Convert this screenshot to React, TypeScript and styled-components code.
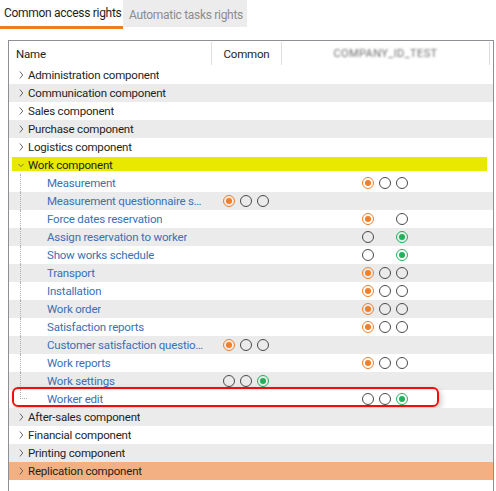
import React from "react";
import styled, { createGlobalStyle, css } from "styled-components";

const Global = createGlobalStyle`
  html, body { margin: 0; padding: 0; background: #fff; overflow: hidden; }
  body {
    font-family: Roboto, "Noto Sans", sans-serif;
    font-size: 11.5px;
    letter-spacing: -0.2px;
    color: #1e1e1e;
  }
`;

const COLS = "202px 70px 208px 1fr";

type Dot = "on" | "off" | "ok" | "none";
type Tone = "plain" | "stripe" | "selected" | "accent";

type Leaf = {
  name: string;
  common?: Dot[];
  company?: Dot[];
  marked?: boolean;
};

type Group = {
  name: string;
  tone?: Tone;
  open?: boolean;
  children?: Leaf[];
};

const on3: Dot[] = ["on", "off", "off"];

const groups: Group[] = [
  { name: "Administration component" },
  { name: "Communication component" },
  { name: "Sales component" },
  { name: "Purchase component" },
  { name: "Logistics component" },
  {
    name: "Work component",
    tone: "selected",
    open: true,
    children: [
      { name: "Measurement", company: on3 },
      { name: "Measurement questionnaire settings", common: on3 },
      { name: "Force dates reservation", company: ["on", "none", "off"] },
      { name: "Assign reservation to worker", company: ["off", "none", "ok"] },
      { name: "Show works schedule", company: ["off", "none", "ok"] },
      { name: "Transport", company: on3 },
      { name: "Installation", company: on3 },
      { name: "Work order", company: on3 },
      { name: "Satisfaction reports", company: on3 },
      { name: "Customer satisfaction questionnaire", common: on3 },
      { name: "Work reports", company: on3 },
      { name: "Work settings", common: ["off", "off", "ok"] },
      { name: "Worker edit", company: ["off", "off", "ok"], marked: true },
    ],
  },
  { name: "After-sales component" },
  { name: "Financial component" },
  { name: "Printing component" },
  { name: "Replication component", tone: "accent" },
];

/* ---------- tabs ---------- */

const TabBar = styled.div`
  display: flex;
  align-items: flex-start;
  height: 29px;
`;

const Tab = styled.div<{ $active?: boolean }>`
  box-sizing: border-box;
  display: flex;
  align-items: center;
  font-size: 12px;
  letter-spacing: -0.3px;
  white-space: nowrap;
  ${(p) =>
    p.$active
      ? css`
          width: 123px;
          height: 29px;
          padding: 0 0 0 4px;
          border-bottom: 3px solid #ee7d22;
          color: #1e1e1e;
        `
      : css`
          width: 124px;
          height: 27px;
          padding: 2px 0 0 6px;
          background: #ececec;
          color: #8c8c8c;
        `}
`;

/* ---------- grid ---------- */

const Panel = styled.div`
  box-sizing: border-box;
  margin: 11px 0 0 8px;
  width: 486px;
  height: 470px;
  border: 1px solid #8e8e94;
  display: flex;
  flex-direction: column;
`;

const Header = styled.div`
  display: grid;
  grid-template-columns: ${COLS};
  height: 25px;
  align-items: stretch;
`;

const HeadCell = styled.div<{ $divider?: boolean; $center?: boolean }>`
  display: flex;
  align-items: center;
  margin: 1px 0 1px;
  padding-left: ${(p) => (p.$center ? 0 : 7)}px;
  justify-content: ${(p) => (p.$center ? "center" : "flex-start")};
  border-left: ${(p) => (p.$divider ? "1px solid #dedede" : "none")};
  color: #1e1e1e;
`;

const Masked = styled.span`
  font-size: 11px;
  letter-spacing: 0.4px;
  color: #6e6e6e;
  filter: blur(1.3px);
`;

const Row = styled.div<{ $tone: Tone }>`
  position: relative;
  display: grid;
  grid-template-columns: ${COLS};
  height: 18px;
  align-items: center;
  ${(p) =>
    p.$tone === "stripe" &&
    css`
      background: #ebebeb;
    `}
  ${(p) =>
    p.$tone === "accent" &&
    css`
      background: #f3b083;
    `}
  ${(p) =>
    p.$tone === "selected" &&
    css`
      background: linear-gradient(#e8e800, #e8e800) 3px 1px / calc(100% - 9px) 14px
        no-repeat;
    `}
`;

const NameCell = styled.div`
  display: flex;
  align-items: center;
  align-self: stretch;
  min-width: 0;
  padding-right: 6px;
`;

const Caret = styled.span`
  display: flex;
  align-items: center;
  justify-content: center;
  width: 6px;
  margin: 0 4px 0 9px;
  color: #555;
`;

const Label = styled.span<{ $child?: boolean }>`
  white-space: nowrap;
  overflow: hidden;
  text-overflow: ellipsis;
  color: ${(p) => (p.$child ? "#3a70b6" : "#1e1e1e")};
`;

const Guide = styled.span<{ $last?: boolean }>`
  flex: none;
  width: 6px;
  margin: 0 20px 0 11px;
  border-left: 1px dotted #b0b0b0;
  ${(p) =>
    p.$last
      ? css`
          align-self: flex-start;
          height: 8px;
          border-bottom: 1px dotted #b0b0b0;
        `
      : css`
          align-self: stretch;
        `}
`;

const Choices = styled.div`
  display: flex;
  justify-content: center;
  gap: 5px;
`;

const Radio = styled.span<{ $state: Dot }>`
  box-sizing: border-box;
  width: 12px;
  height: 12px;
  border-radius: 50%;
  display: flex;
  align-items: center;
  justify-content: center;
  border: 1.5px solid
    ${(p) => (p.$state === "on" ? "#ef7f2b" : p.$state === "ok" ? "#1fb25a" : "#4a4a4a")};
  visibility: ${(p) => (p.$state === "none" ? "hidden" : "visible")};
  &::after {
    content: "";
    width: 6px;
    height: 6px;
    border-radius: 50%;
    background: ${(p) =>
      p.$state === "on" ? "#ef7f2b" : p.$state === "ok" ? "#1fb25a" : "transparent"};
  }
`;

const Callout = styled.div`
  position: absolute;
  left: 3px;
  top: -3px;
  width: 427px;
  height: 20px;
  box-sizing: border-box;
  border: 2px solid #f20d0d;
  border-radius: 6px;
  box-shadow: 2px 3px 6px rgba(0, 0, 0, 0.22);
  pointer-events: none;
`;

/* ---------- pieces ---------- */

function Chevron({ open }: { open?: boolean }) {
  return open ? (
    <svg width="7" height="5" viewBox="0 0 7 5">
      <polyline points="0.5,0.8 3.5,3.8 6.5,0.8" fill="none" stroke="#666" strokeWidth="1" />
    </svg>
  ) : (
    <svg width="5" height="8" viewBox="0 0 5 8">
      <polyline points="0.8,0.5 3.8,4 0.8,7.5" fill="none" stroke="#666" strokeWidth="1" />
    </svg>
  );
}

function RadioSet({ states }: { states?: Dot[] }) {
  if (!states) return <div />;
  return (
    <Choices>
      {states.map((s, i) => (
        <Radio key={i} $state={s} />
      ))}
    </Choices>
  );
}

export default function App() {
  let index = 0;
  const rows: React.ReactNode[] = [];

  const toneFor = (i: number, forced?: Tone): Tone =>
    forced ?? (i % 2 === 1 ? "stripe" : "plain");

  groups.forEach((g) => {
    const i = index++;
    rows.push(
      <Row key={g.name} $tone={toneFor(i, g.tone)}>
        <NameCell>
          <Caret>
            <Chevron open={g.open} />
          </Caret>
          <Label>{g.name}</Label>
        </NameCell>
        <div />
        <div />
        <div />
      </Row>
    );
    if (g.open && g.children) {
      g.children.forEach((c, ci) => {
        const j = index++;
        const last = ci === g.children!.length - 1;
        rows.push(
          <Row key={c.name} $tone={toneFor(j)}>
            <NameCell>
              <Guide $last={last} />
              <Label $child>{c.name}</Label>
            </NameCell>
            <RadioSet states={c.common} />
            <RadioSet states={c.company} />
            <div />
            {c.marked && <Callout />}
          </Row>
        );
      });
    }
  });

  return (
    <>
      <Global />
      <TabBar>
        <Tab $active>Common access rights</Tab>
        <Tab>Automatic tasks rights</Tab>
      </TabBar>
      <Panel>
        <Header>
          <HeadCell>Name</HeadCell>
          <HeadCell $divider $center>
            Common
          </HeadCell>
          <HeadCell $divider $center>
            <Masked>COMPANY_ID_TEST</Masked>
          </HeadCell>
          <HeadCell $divider />
        </Header>
        {rows}
      </Panel>
    </>
  );
}
